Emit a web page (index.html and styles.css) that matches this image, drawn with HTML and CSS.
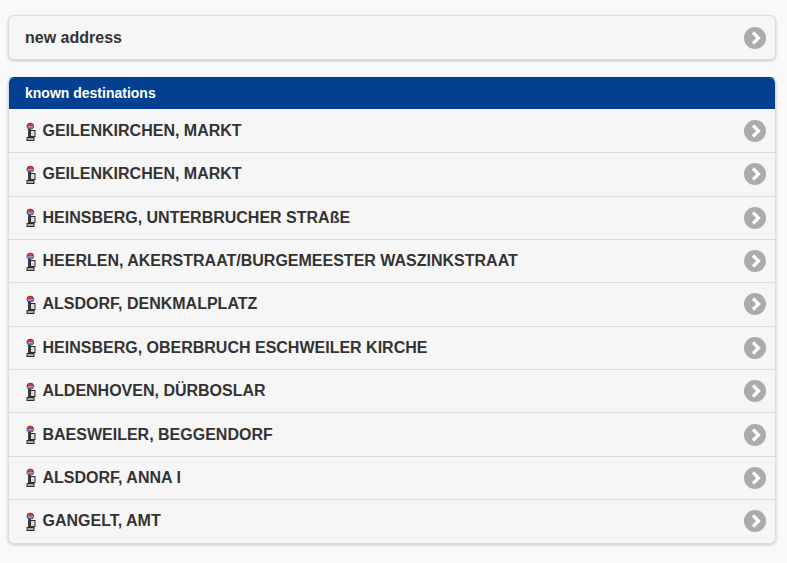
FILE: index.html
```html
<!DOCTYPE html>
<html lang="en">
<head>
    <meta charset="UTF-8">
    <meta name="viewport" content="width=device-width, initial-scale=1.0">
    <title>Destinations</title>
    <link rel="stylesheet" href="styles.css">
</head>
<body>
    <svg class="sprites" width="0" height="0">
        <symbol id="stop" viewBox="0 0 10 19">
            <rect x="2" y="7" width="3" height="8.500" fill="#3c3c3c"/>
            <rect x="4.500" y="8.500" width="4.500" height="6" fill="#dcdcdc" stroke="#2a2a2a"/>
            <rect x="1" y="15.500" width="7" height="3" fill="#aaa" stroke="#2a2a2a"/>
            <path d="M0.800 4.500a3.500 3.500 0 0 1 7 0z" fill="#e8303f"/>
            <path d="M0.800 4.500a3.500 2.500 0 0 0 7 0z" fill="#5f86e6"/>
            <path d="M0.800 4.500a3.500 3.500 0 0 1 7 0a3.500 2.500 0 0 1-7 0z" fill="none" stroke="#2a2a2a" stroke-width="0.600"/>
        </symbol>
        <symbol id="go" viewBox="0 0 22 22">
            <circle cx="11" cy="11" r="11" fill="#ababab"/>
            <path d="M9 5.500 14.500 11 9 16.500" fill="none" stroke="#fff" stroke-width="3.200"/>
        </symbol>
    </svg>

    <ul class="list new-address">
        <li class="row"><span class="label">new address</span><svg class="go"><use href="#go"/></svg></li>
    </ul>

    <ul class="list known">
        <li class="divider">known destinations</li>
        <li class="row"><svg class="stop"><use href="#stop"/></svg><span class="label">GEILENKIRCHEN, MARKT</span><svg class="go"><use href="#go"/></svg></li>
        <li class="row"><svg class="stop"><use href="#stop"/></svg><span class="label">GEILENKIRCHEN, MARKT</span><svg class="go"><use href="#go"/></svg></li>
        <li class="row"><svg class="stop"><use href="#stop"/></svg><span class="label">HEINSBERG, UNTERBRUCHER STRAßE</span><svg class="go"><use href="#go"/></svg></li>
        <li class="row"><svg class="stop"><use href="#stop"/></svg><span class="label">HEERLEN, AKERSTRAAT/BURGEMEESTER WASZINKSTRAAT</span><svg class="go"><use href="#go"/></svg></li>
        <li class="row"><svg class="stop"><use href="#stop"/></svg><span class="label">ALSDORF, DENKMALPLATZ</span><svg class="go"><use href="#go"/></svg></li>
        <li class="row"><svg class="stop"><use href="#stop"/></svg><span class="label">HEINSBERG, OBERBRUCH ESCHWEILER KIRCHE</span><svg class="go"><use href="#go"/></svg></li>
        <li class="row"><svg class="stop"><use href="#stop"/></svg><span class="label">ALDENHOVEN, DÜRBOSLAR</span><svg class="go"><use href="#go"/></svg></li>
        <li class="row"><svg class="stop"><use href="#stop"/></svg><span class="label">BAESWEILER, BEGGENDORF</span><svg class="go"><use href="#go"/></svg></li>
        <li class="row"><svg class="stop"><use href="#stop"/></svg><span class="label">ALSDORF, ANNA I</span><svg class="go"><use href="#go"/></svg></li>
        <li class="row"><svg class="stop"><use href="#stop"/></svg><span class="label">GANGELT, AMT</span><svg class="go"><use href="#go"/></svg></li>
    </ul>
</body>
</html>
```

FILE: styles.css
```css
body {
    margin: 0;
    padding: 15px 11px 0 8px;
    background: #f9f9f9;
    font-family: "Liberation Sans", Arial, sans-serif;
    color: #333;
}

.sprites {
    position: absolute;
}

.list {
    list-style: none;
    margin: 0 0 17px;
    padding: 0;
    background: #f6f6f6;
    border: 1px solid #ddd;
    border-radius: 6px;
    box-shadow: 0 1px 3px rgba(0, 0, 0, 0.2);
    overflow: hidden;
}

.known {
    border-top-color: #034091;
}

.divider {
    height: 31px;
    margin-bottom: 0.95px;
    padding-left: 16px;
    background: #034091;
    color: #fff;
    font-size: 14px;
    font-weight: bold;
    line-height: 30px;
}

.row {
    display: flex;
    align-items: center;
    height: 43.35px;
    box-sizing: border-box;
    padding: 0 9px 0 16px;
    border-bottom: 1px solid #ddd;
    font-size: 16px;
    font-weight: bold;
}

.row:last-child {
    border-bottom-color: transparent;
}

.new-address .row {
    height: 43px;
    border-bottom: none;
}

.label {
    flex: 1;
}

.stop {
    width: 10px;
    height: 19px;
    margin: 0 6.5px 0 1px;
}

.go {
    width: 22px;
    height: 22px;
}
```
